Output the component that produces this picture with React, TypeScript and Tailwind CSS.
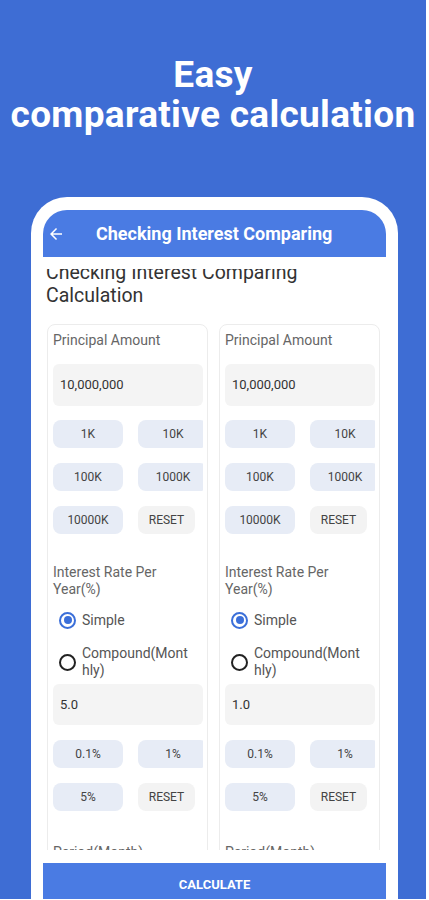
import React from "react";

function Btn({ label, gray }: { label: string; gray?: boolean }) {
  return (
    <div
      className={
        gray
          ? "h-[28px] w-[57px] shrink-0 rounded-lg bg-[#f3f3f3] flex items-center justify-center text-[12px] text-[#444]"
          : "h-[28px] w-[70px] shrink-0 rounded-lg bg-[#e7ecf6] flex items-center justify-center text-[12px] text-[#444]"
      }
    >
      {label}
    </div>
  );
}

function Row({ a, b, gray }: { a: string; b: string; gray?: boolean }) {
  return (
    <div className="flex gap-[15px] overflow-hidden">
      <Btn label={a} />
      <Btn label={b} gray={gray} />
    </div>
  );
}

function Radio({ checked, label }: { checked?: boolean; label: string }) {
  return (
    <div className="flex items-center gap-[6px] pl-[6px]">
      {checked ? (
        <div className="w-[17px] h-[17px] shrink-0 rounded-full border-2 border-[#3b6fd9] flex items-center justify-center">
          <div className="w-[8px] h-[8px] rounded-full bg-[#3b6fd9]" />
        </div>
      ) : (
        <div className="w-[17px] h-[17px] shrink-0 rounded-full border-2 border-[#222]" />
      )}
      <div className="w-[112px] break-all text-[14px] leading-[17px] text-[#555]">{label}</div>
    </div>
  );
}

function Card({ rate }: { rate: string }) {
  return (
    <div className="w-[161px] h-[640px] shrink-0 border border-[#ececec] rounded-lg pl-[5px] pr-[4px] pt-[6px]">
      <div className="text-[14px] leading-[18px] text-[#666]">Principal Amount</div>
      <div className="mt-[15px] h-[42px] rounded-md bg-[#f4f4f4] flex items-center pl-[7px] text-[13px] text-[#333]">
        10,000,000
      </div>
      <div className="mt-[14px] flex flex-col gap-[15px]">
        <Row a="1K" b="10K" />
        <Row a="100K" b="1000K" />
        <Row a="10000K" b="RESET" gray />
      </div>
      <div className="mt-[30px] w-[130px] text-[14px] leading-[17px] text-[#666]">Interest Rate Per Year(%)</div>
      <div className="mt-[10px] h-[24px] flex items-center">
        <Radio checked label="Simple" />
      </div>
      <div className="mt-[13px]">
        <Radio label="Compound(Monthly)" />
      </div>
      <div className="mt-[5px] h-[41px] rounded-md bg-[#f4f4f4] flex items-center pl-[7px] text-[13px] text-[#333]">
        {rate}
      </div>
      <div className="mt-[15px] flex flex-col gap-[15px]">
        <Row a="0.1%" b="1%" />
        <Row a="5%" b="RESET" gray />
      </div>
      <div className="mt-[33px] text-[14px] leading-[17px] text-[#666]">Period(Month)</div>
    </div>
  );
}

export default function App() {
  return (
    <div className="w-[429px] h-[900px] bg-white overflow-hidden font-['Roboto','Noto_Sans',sans-serif]">
      <div className="w-[426px] h-[899px] bg-[#3e6dd4] flex flex-col overflow-hidden">
        <h1 className="pt-[55px] text-center text-white font-bold text-[37px] tracking-[0.3px] leading-[40px] shrink-0 whitespace-nowrap">
          Easy
          <br />
          comparative calculation
        </h1>
        <div className="mt-[62px] ml-[31px] w-[367px] h-[720px] shrink-0 bg-white rounded-t-[36px] pt-[13px] px-[12px] flex flex-col">
          <div className="h-[47px] shrink-0 rounded-t-[24px] bg-[#4a7be3] flex items-center pl-[4px]">
            <svg width="18" height="18" viewBox="0 0 24 24" fill="white">
              <path d="M20 11H7.83l5.59-5.59L12 4l-8 8 8 8 1.41-1.41L7.83 13H20v-2z" />
            </svg>
            <div className="ml-[31px] text-white font-bold text-[18px]">Checking Interest Comparing</div>
          </div>
          <div className="h-[12px] shrink-0" />
          <div className="h-[581px] shrink-0 overflow-hidden">
            <div className="-mt-[8px] pl-[3px] text-[19.5px] leading-[23px] text-[#333]">
              Checking Interest Comparing
              <br />
              Calculation
            </div>
            <div className="mt-[17px] pl-[4px] flex gap-[11px]">
              <Card rate="5.0" />
              <Card rate="1.0" />
            </div>
          </div>
          <div className="mt-[13px] h-[44px] shrink-0 bg-[#4a7be3] flex items-center justify-center text-white font-bold text-[13px]">
            CALCULATE
          </div>
        </div>
      </div>
    </div>
  );
}
